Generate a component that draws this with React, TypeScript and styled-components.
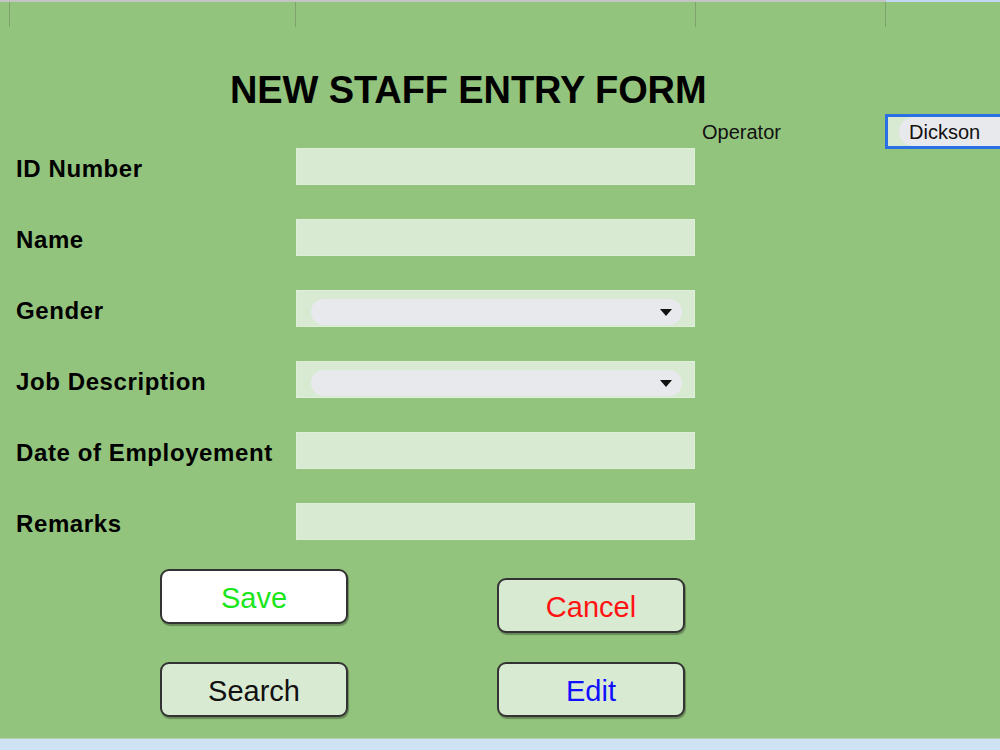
import React, { FC } from 'react';
import styled, { createGlobalStyle } from 'styled-components';

const GlobalStyle = createGlobalStyle`
  html, body {
    margin: 0;
    padding: 0;
    background: #93c47d;
  }
  body {
    font-family: 'Liberation Sans', Arial, sans-serif;
    color: #111;
  }
`;

const Sheet = styled.div`
  width: 1000px;
  height: 750px;
  display: flex;
  flex-direction: column;
  background: #93c47d;
  overflow: hidden;
`;

const HeaderEdge = styled.div`
  height: 2px;
  display: flex;
  flex: 0 0 auto;
`;

interface IEdge {
  selected?: boolean;
}
const EdgeSegment = styled.div<IEdge>`
  height: 100%;
  flex: ${props => (props.selected ? '1 1 auto' : '0 0 886px')};
  background: ${props => (props.selected ? '#c3d6f4' : '#c4c4c4')};
`;

const GridStrip = styled.div`
  height: 25px;
  display: grid;
  grid-template-columns: 10px 286px 400px 190px 1fr;
  flex: 0 0 auto;
`;

const GridCell = styled.div`
  box-sizing: border-box;
  border-right: 1px solid rgba(110, 140, 96, 0.6);
  &:last-child {
    border-right: none;
  }
`;

const Title = styled.h1`
  margin: 40px 0 0;
  padding-left: 230px;
  height: 46px;
  line-height: 46px;
  font-size: 38px;
  font-weight: bold;
  letter-spacing: -0.1px;
  color: #000;
`;

const Body = styled.div`
  margin-top: 1px;
  display: grid;
  grid-template-columns: 696px 1fr;
`;

const Form = styled.div`
  padding-top: 34px;
  display: flex;
  flex-direction: column;
  gap: 34px;
`;

const Row = styled.div`
  height: 37px;
  display: grid;
  grid-template-columns: 296px 399px;
  align-items: center;
`;

const Label = styled.div`
  padding-left: 16px;
  margin-top: 4px;
  font-size: 24px;
  font-weight: bold;
  letter-spacing: 0.6px;
  color: #000;
`;

const Field = styled.div`
  box-sizing: border-box;
  height: 37px;
  background: #d9ead3;
  border: 1px solid #dfeeda;
`;

const DropField = styled(Field)`
  padding: 8px 12px 1px 14px;
  display: flex;
`;

const Pill = styled.div`
  flex: 1;
  border-radius: 13px;
  background: #e8e9ec;
  display: flex;
  align-items: center;
  justify-content: flex-end;
  padding-right: 10px;
`;

const Caret = styled.div`
  width: 0;
  height: 0;
  border-left: 6px solid transparent;
  border-right: 6px solid transparent;
  border-top: 7px solid #111;
`;

const Side = styled.div`
  display: flex;
  align-items: center;
  height: 35px;
`;

const OperatorLabel = styled.div`
  width: 189px;
  padding: 2px 0 0 6px;
  box-sizing: border-box;
  font-size: 20px;
  color: #111;
`;

const OperatorBox = styled.div`
  box-sizing: border-box;
  width: 140px;
  height: 35px;
  flex: 0 0 auto;
  border: 3px solid #2a6fe4;
  background: #d9ead3;
  padding-left: 11px;
  display: flex;
`;

const OperatorValue = styled.div`
  flex: 1;
  border-radius: 15px 0 0 15px;
  background: #e8e9ec;
  padding: 2px 0 0 10px;
  display: flex;
  align-items: center;
  font-size: 20px;
  color: #111;
`;

const Actions = styled.div`
  margin-top: 29px;
  padding-left: 160px;
  display: grid;
  grid-template-columns: 188px 188px;
  column-gap: 149px;
  row-gap: 29px;
`;

interface IButton {
  color: string;
  light?: boolean;
  offset?: number;
}
const Button = styled.button<IButton>`
  box-sizing: border-box;
  width: 188px;
  height: 55px;
  margin-top: ${props => (props.offset ? `${props.offset}px` : '0')};
  border: 2px solid #333;
  border-radius: 9px;
  box-shadow: 1px 2px 1px rgba(0, 0, 0, 0.3);
  background: ${props => (props.light ? '#ffffff' : '#d9ead3')};
  color: ${props => props.color};
  font-family: 'Liberation Sans', Arial, sans-serif;
  font-size: 29px;
  padding: 3px 0 0;
  cursor: pointer;
`;

const Filler = styled.div`
  flex: 1;
`;

const FooterEdge = styled.div`
  height: 11px;
  flex: 0 0 auto;
  background: #cfe2f3;
  border-top: 1px solid #b9cfae;
`;

interface IEntry {
  label: string;
  select?: boolean;
}
const Entry: FC<IEntry> = ({ label, select }) => (
  <Row>
    <Label>{label}</Label>
    {select ? (
      <DropField>
        <Pill>
          <Caret />
        </Pill>
      </DropField>
    ) : (
      <Field />
    )}
  </Row>
);

const entries: IEntry[] = [
  { label: 'ID Number' },
  { label: 'Name' },
  { label: 'Gender', select: true },
  { label: 'Job Description', select: true },
  { label: 'Date of Employement' },
  { label: 'Remarks' },
];

const App: FC = () => (
  <>
    <GlobalStyle />
    <Sheet>
      <HeaderEdge>
        <EdgeSegment />
        <EdgeSegment selected />
      </HeaderEdge>
      <GridStrip>
        <GridCell />
        <GridCell />
        <GridCell />
        <GridCell />
        <GridCell />
      </GridStrip>
      <Title>NEW STAFF ENTRY FORM</Title>
      <Body>
        <Form>
          {entries.map(entry => (
            <Entry key={entry.label} {...entry} />
          ))}
        </Form>
        <Side>
          <OperatorLabel>Operator</OperatorLabel>
          <OperatorBox>
            <OperatorValue>Dickson</OperatorValue>
          </OperatorBox>
        </Side>
      </Body>
      <Actions>
        <Button light color="#1be51b">Save</Button>
        <Button color="#ff1414" offset={9}>Cancel</Button>
        <Button color="#111">Search</Button>
        <Button color="#1010ff">Edit</Button>
      </Actions>
      <Filler />
      <FooterEdge />
    </Sheet>
  </>
);

export default App;
